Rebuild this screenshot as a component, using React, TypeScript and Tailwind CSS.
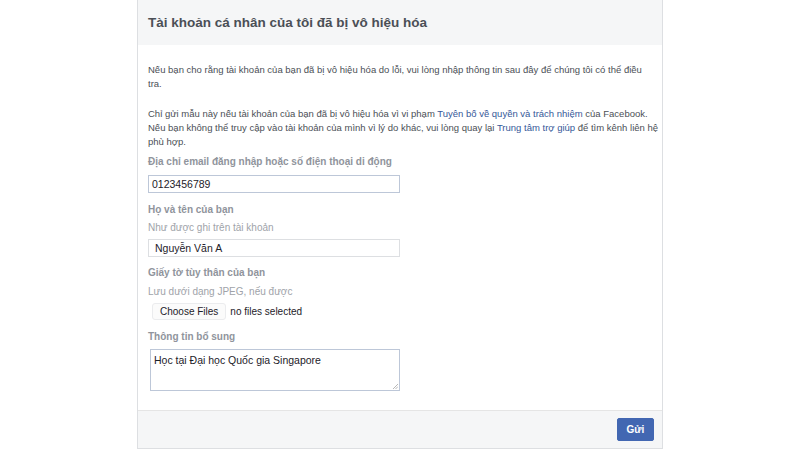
export default function App() {
  const font = { fontFamily: '"Liberation Sans", Arial, sans-serif' };
  return (
    <div className="w-[800px] h-[450px] bg-white overflow-hidden" style={font}>
      <div className="ml-[137px] w-[526px] h-[449px] border border-t-0 border-[#dddfe2] flex flex-col">
        <div className="h-[45px] bg-[#f5f6f7] flex items-center px-[10px]">
          <h1 className="text-[13.5px] font-bold text-[#4b4f56] pt-[2px]">Tài khoản cá nhân của tôi đã bị vô hiệu hóa</h1>
        </div>
        <div className="flex-1 pl-[10px] pr-[1px] pt-[18px] text-[9.5px] leading-[14px] text-[#4b4f56]">
          <p className="w-[500px]">Nếu bạn cho rằng tài khoản của bạn đã bị vô hiệu hóa do lỗi, vui lòng nhập thông tin sau đây để chúng tôi có thể điều tra.</p>
          <p className="mt-[16px]">
            Chỉ gửi mẫu này nếu tài khoản của bạn đã bị vô hiệu hóa vì vi phạm{' '}
            <a className="text-[#365899]">Tuyên bố về quyền và trách nhiệm</a> của Facebook. Nếu bạn không thể truy cập vào tài khoản của mình vì lý do khác, vui lòng quay lại{' '}
            <a className="text-[#365899]">Trung tâm trợ giúp</a> để tìm kênh liên hệ phù hợp.
          </p>
          <div className="mt-[6px] text-[10px] font-bold text-[#90949c]">Địa chỉ email đăng nhập hoặc số điện thoại di động</div>
          <div className="mt-[6px] w-[252px] h-[18px] border border-[#bdc7d8] text-[10.5px] text-[#1d2129] px-[3px] flex items-center">0123456789</div>
          <div className="mt-[10px] text-[10px] font-bold text-[#90949c]">Họ và tên của bạn</div>
          <div className="mt-[4px] text-[10px] text-[#a0a3a9]">Như được ghi trên tài khoản</div>
          <div className="mt-[4px] w-[252px] h-[18px] border border-[#dddfe2] text-[10.5px] text-[#1d2129] px-[6px] flex items-center">Nguyễn Văn A</div>
          <div className="mt-[9px] text-[10px] font-bold text-[#90949c]">Giấy tờ tùy thân của bạn</div>
          <div className="mt-[5px] text-[10px] text-[#a0a3a9]">Lưu dưới dạng JPEG, nếu được</div>
          <div className="mt-[4px] flex items-center gap-[4px] text-[10px] text-[#1d2129]">
            <span className="ml-[4px] h-[17px] px-[7px] border border-[#ebecee] rounded-[3px] bg-[#fbfbfb] flex items-center">Choose Files</span>
            <span>no files selected</span>
          </div>
          <div className="mt-[10px] text-[10px] font-bold text-[#90949c]">Thông tin bổ sung</div>
          <div className="mt-[5px] ml-[2px] w-[250px] h-[42px] border border-[#bdc7d8] text-[10.5px] text-[#1d2129] px-[3px] pt-[3px] relative">
            Học tại Đại học Quốc gia Singapore
            <svg className="absolute right-[1px] bottom-[1px]" width="6" height="6" viewBox="0 0 6 6">
              <path d="M1 6 L6 1 M3.5 6 L6 3.5" stroke="#999" strokeWidth="0.7" />
            </svg>
          </div>
        </div>
        <div className="h-[38px] bg-[#f5f6f7] border-t border-[#e5e5e5] flex items-center justify-end px-[8px]">
          <button className="h-[23px] w-[37px] bg-[#4267b2] text-white text-[10px] font-bold rounded-[2px] border border-[#4267b2]">Gửi</button>
        </div>
      </div>
    </div>
  );
}
